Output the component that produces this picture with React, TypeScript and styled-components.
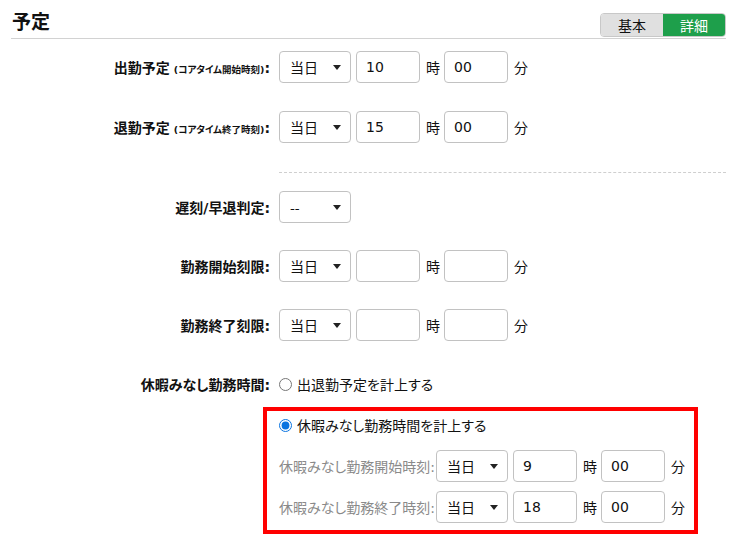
import React from "react";
import styled, { createGlobalStyle } from "styled-components";

const GlobalStyle = createGlobalStyle`
  html, body { margin: 0; padding: 0; background: #fff; }
  body {
    font-family: "DejaVu Sans", "Noto Sans CJK JP", sans-serif;
    font-size: 14px;
    color: #111;
  }
  * { box-sizing: border-box; }
`;

const Page = styled.div`
  width: 737px;
  padding: 0 11px;
`;

const Header = styled.header`
  display: flex;
  justify-content: space-between;
  align-items: flex-start;
  height: 39px;
  border-bottom: 1px solid #d2d2d2;
`;

const Title = styled.h2`
  margin: 8px 0 0 1px;
  font-family: "Noto Sans CJK JP", sans-serif;
  font-size: 19px;
  line-height: 26px;
  font-weight: bold;
  color: #111;
`;

const Toggle = styled.div`
  display: flex;
  margin-top: 13px;
  height: 24px;
  border: 1px solid #c8c8c8;
  border-radius: 4px;
  overflow: hidden;
`;

const ToggleBtn = styled.span<{ $active?: boolean }>`
  width: 62px;
  display: flex;
  align-items: center;
  justify-content: center;
  font-family: "Noto Sans CJK JP", sans-serif;
  font-size: 14px;
  background: ${(p) => (p.$active ? "#1e9f4b" : "#e0e0e0")};
  color: ${(p) => (p.$active ? "#fff" : "#111")};
`;

const Form = styled.div`
  padding-top: 12px;
`;

const Row = styled.div<{ $mt?: number }>`
  display: flex;
  align-items: center;
  height: 32px;
  margin-top: ${(p) => p.$mt ?? 0}px;
`;

const Label = styled.div`
  width: 259px;
  margin-right: 9px;
  text-align: right;
  font-weight: bold;
  font-size: 14px;
  white-space: nowrap;
  font-feature-settings: "palt";
`;

const Small = styled.span`
  font-size: 9.5px;
  font-weight: bold;
  margin-left: 4px;
`;

const Controls = styled.div`
  display: flex;
  align-items: center;
  gap: 5px;
`;

const Select = styled.div`
  width: 72px;
  height: 32px;
  flex: none;
  border: 1px solid #c2c2c2;
  border-radius: 4px;
  background: #fff;
  display: flex;
  align-items: center;
  justify-content: space-between;
  padding: 0 9px 0 10px;
  font-family: "Noto Sans CJK JP", sans-serif;
  font-size: 14px;
  color: #111;
  &::after {
    content: "";
    border-left: 4px solid transparent;
    border-right: 4px solid transparent;
    border-top: 5px solid #222;
  }
`;

const Input = styled.input`
  width: 64px;
  height: 32px;
  flex: none;
  border: 1px solid #c2c2c2;
  border-radius: 4px;
  padding: 0 9px;
  font: inherit;
  font-size: 14px;
  color: #111;
  background: #fff;
  outline: none;
`;

const Unit = styled.span`
  width: 14px;
  margin: 0 -1px 0 1px;
  font-family: "Noto Sans CJK JP", sans-serif;
  font-size: 14px;
  color: #111;
`;

const Separator = styled.div`
  margin: 29px 0 18px 268px;
  border-top: 1px dashed #cfcfcf;
`;

const RadioLabel = styled.label`
  display: flex;
  align-items: center;
  gap: 5px;
  font-family: "Noto Sans CJK JP", sans-serif;
  font-size: 14px;
  color: #111;
  font-feature-settings: "palt";
`;

const Radio = styled.input`
  width: 13px;
  height: 13px;
  margin: 0;
  accent-color: #0a74e0;
`;

const Highlight = styled.div`
  margin: 7px 0 0 252px;
  width: 435px;
  border: 4px solid #ff0000;
  padding: 2px 0 7px 12px;
`;

const InnerRadioRow = styled.div`
  display: flex;
  align-items: center;
  height: 24px;
`;

const InnerRow = styled.div<{ $mt: number }>`
  display: flex;
  align-items: center;
  height: 32px;
  margin-top: ${(p) => p.$mt}px;
`;

const SubLabel = styled.span`
  width: 151px;
  margin-right: 6px;
  flex: none;
  white-space: nowrap;
  color: #8a8a8a;
  font-size: 14px;
  font-feature-settings: "palt";
`;

type TimeProps = { day?: string; hour?: string; min?: string };

function TimeControls({ day = "当日", hour = "", min = "" }: TimeProps) {
  return (
    <Controls>
      <Select>{day}</Select>
      <Input readOnly value={hour} />
      <Unit>時</Unit>
      <Input readOnly value={min} />
      <Unit>分</Unit>
    </Controls>
  );
}

export default function App() {
  return (
    <>
      <GlobalStyle />
      <Page>
        <Header>
          <Title>予定</Title>
          <Toggle>
            <ToggleBtn>基本</ToggleBtn>
            <ToggleBtn $active>詳細</ToggleBtn>
          </Toggle>
        </Header>
        <Form>
          <Row>
            <Label>
              出勤予定<Small>(コアタイム開始時刻)</Small>:
            </Label>
            <TimeControls hour="10" min="00" />
          </Row>
          <Row $mt={28}>
            <Label>
              退勤予定<Small>(コアタイム終了時刻)</Small>:
            </Label>
            <TimeControls hour="15" min="00" />
          </Row>
          <Separator />
          <Row>
            <Label>遅刻/早退判定:</Label>
            <Controls>
              <Select>--</Select>
            </Controls>
          </Row>
          <Row $mt={27}>
            <Label>勤務開始刻限:</Label>
            <TimeControls />
          </Row>
          <Row $mt={27}>
            <Label>勤務終了刻限:</Label>
            <TimeControls />
          </Row>
          <Row $mt={27}>
            <Label>休暇みなし勤務時間:</Label>
            <RadioLabel>
              <Radio type="radio" name="mode" readOnly />
              出退勤予定を計上する
            </RadioLabel>
          </Row>
          <Highlight>
            <InnerRadioRow>
              <RadioLabel>
                <Radio type="radio" name="mode" defaultChecked />
                休暇みなし勤務時間を計上する
              </RadioLabel>
            </InnerRadioRow>
            <InnerRow $mt={13}>
              <SubLabel>休暇みなし勤務開始時刻:</SubLabel>
              <TimeControls hour="9" min="00" />
            </InnerRow>
            <InnerRow $mt={9}>
              <SubLabel>休暇みなし勤務終了時刻:</SubLabel>
              <TimeControls hour="18" min="00" />
            </InnerRow>
          </Highlight>
        </Form>
      </Page>
    </>
  );
}
